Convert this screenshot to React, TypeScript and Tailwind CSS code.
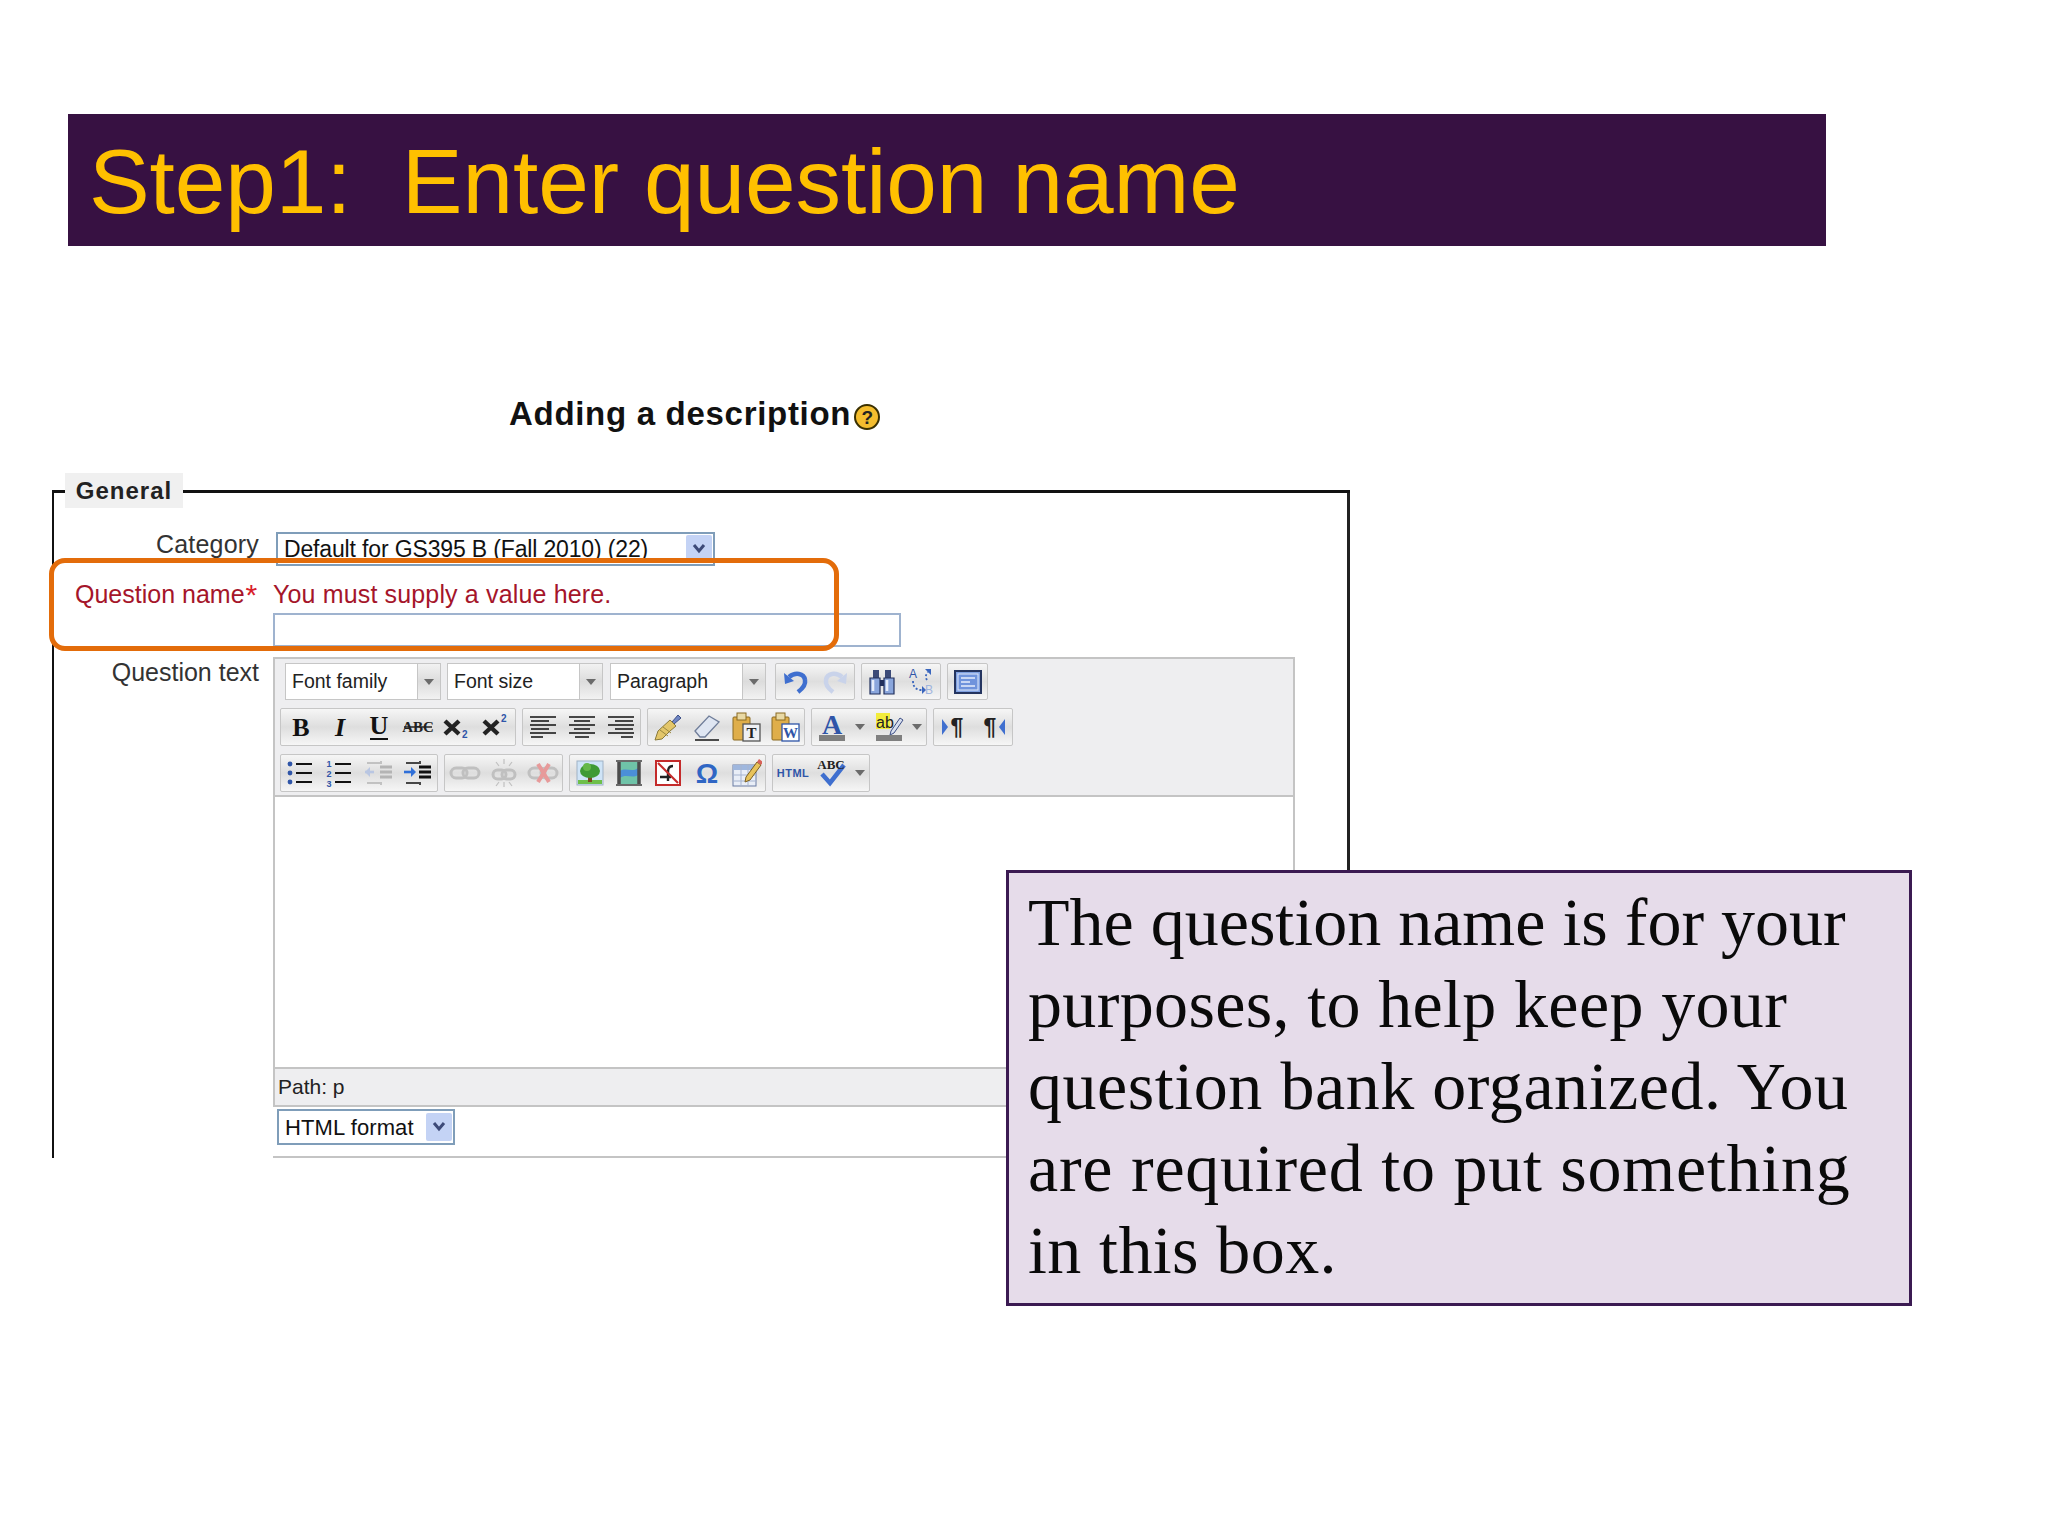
import type { ReactNode } from "react";

const Arrow = () => (
  <svg width="12" height="8" viewBox="0 0 12 8">
    <path d="M1 1h10L6 7z" fill="#6b6b6b" />
  </svg>
);

const Icon = ({ children }: { children: ReactNode }) => (
  <svg width="32" height="32" viewBox="0 0 32 32">
    {children}
  </svg>
);

const serif = "Liberation Serif";
const sans = "Liberation Sans";

const Undo = ({ color = "#3f6fcf", flip = false }: { color?: string; flip?: boolean }) => (
  <Icon>
    <g transform={flip ? "translate(32 0) scale(-1 1)" : undefined}>
      <path d="M9 11c6-5 15-4 16 3 1 5-3 9-7 12" fill="none" stroke={color} strokeWidth="4.5" />
      <path d="M4 7l1 11 9-3z" fill={color} />
    </g>
  </Icon>
);

const Find = () => (
  <Icon>
    <path d="M7 4h6v8H7zM19 4h6v8h-6z" fill="#3b4a78" />
    <path d="M4 12h10v16H4zM18 12h10v16H18z" fill="#8aa6dc" stroke="#22305c" strokeWidth="1.2" />
    <path d="M14 14h4v6h-4z" fill="#22305c" />
    <path d="M7 14v11M21 14v11" stroke="#e6edfa" strokeWidth="2.6" />
  </Icon>
);

const Replace = () => (
  <Icon>
    <text x="4" y="12" fontFamily={sans} fontSize="12" fill="#2f55a8">A</text>
    <text x="20" y="28" fontFamily={sans} fontSize="12" fill="#9db4de">B</text>
    <path d="M8 15c0 6 3 9 9 9M22 14c-2-3-1-6 1-8" fill="none" stroke="#3a66bd" strokeWidth="1.8" strokeDasharray="2 2" />
    <path d="M17 20l4 4-4 4zM20 3h6v6z" fill="#3a66bd" />
  </Icon>
);

const Fullscreen = () => (
  <Icon>
    <rect x="3" y="5" width="26" height="22" fill="#7fa0e0" stroke="#24345f" strokeWidth="2" />
    <rect x="6" y="8" width="20" height="16" fill="#6f93dc" stroke="#dfe8fa" />
    <path d="M9 12h14M9 16h9M9 20h14" stroke="#e8eefb" strokeWidth="1.6" />
  </Icon>
);

const LetterIcon = ({ text, italic = false, underline = false }: { text: string; italic?: boolean; underline?: boolean }) => (
  <Icon>
    <text x="16" y={underline ? 23 : 25} textAnchor="middle" fontFamily={serif} fontWeight="700" fontStyle={italic ? "italic" : "normal"} fontSize="26" fill="#111">
      {text}
    </text>
    {underline && <path d="M7 28h18" stroke="#111" strokeWidth="2" />}
  </Icon>
);

const Strike = () => (
  <Icon>
    <text x="16" y="21" textAnchor="middle" fontFamily={serif} fontWeight="700" fontSize="15" fill="#222">ABC</text>
    <path d="M2 16h28" stroke="#222" strokeWidth="1.5" />
  </Icon>
);

const Script = ({ sup = false }: { sup?: boolean }) => (
  <Icon>
    <path d="M4 10l14 13M18 10L4 23" stroke="#222" strokeWidth="4.4" />
    <text x="21" y={sup ? 11 : 27} fontFamily={sans} fontWeight="700" fontSize="10" fill="#2f55a8">2</text>
  </Icon>
);

const Align = ({ kind }: { kind: "left" | "center" | "right" }) => {
  const short = kind === "left" ? "M4 10h18M4 18h18M4 26h12" : kind === "center" ? "M8 10h16M8 18h16M9 26h14" : "M10 10h18M10 18h18M16 26h12";
  return (
    <Icon>
      <path d="M3 6h26M3 14h26M3 22h26" stroke="#111" strokeWidth="1.7" />
      <path d={short} stroke="#111" strokeWidth="1.7" />
    </Icon>
  );
};

const Brush = () => (
  <Icon>
    <path d="M20 11l6-7 3 3-7 6z" fill="#6f86c4" stroke="#3d4f86" />
    <path d="M18 9l6 6-6 5-8 8-7 1 3-9z" fill="#e3c66a" stroke="#8a7a3a" />
    <path d="M8 19l8 6M11 16l8 6" stroke="#9a8840" />
  </Icon>
);

const Eraser = () => (
  <Icon>
    <path d="M4 20L18 5l10 6-14 15H9z" fill="#dfe6f2" stroke="#6f7d99" strokeWidth="1.3" />
    <path d="M4 29h24" stroke="#222" strokeWidth="1.6" />
  </Icon>
);

const Paste = ({ letter }: { letter: "T" | "W" }) => (
  <Icon>
    <rect x="3" y="6" width="17" height="23" rx="1" fill="#dfae4a" stroke="#8a6a22" />
    <rect x="7" y="2" width="9" height="7" fill="#e9d9a4" stroke="#8a6a22" />
    <rect x="13" y="13" width="17" height="17" fill={letter === "T" ? "#eef0f4" : "#ffffff"} stroke={letter === "T" ? "#555" : "#2f55a8"} strokeWidth="1.3" />
    <text x="21.5" y="27" textAnchor="middle" fontFamily={serif} fontWeight="700" fontSize="15" fill={letter === "T" ? "#222" : "#2f55a8"}>{letter}</text>
  </Icon>
);

const ForeColor = () => (
  <Icon>
    <text x="16" y="23" textAnchor="middle" fontFamily={serif} fontWeight="700" fontSize="28" fill="#2f55a8">A</text>
    <rect x="3" y="24" width="26" height="6" fill="#7f7f7f" />
  </Icon>
);

const BackColor = () => (
  <Icon>
    <rect x="3" y="2" width="14" height="16" fill="#f2ec3c" />
    <text x="3" y="17" fontFamily={sans} fontSize="16" fill="#222">ab</text>
    <path d="M18 20l9-13 3 2-9 13-4 2z" fill="#d8dfee" stroke="#3d4f86" />
    <rect x="3" y="24" width="26" height="6" fill="#7f7f7f" />
  </Icon>
);

const Bidi = ({ rtl = false }: { rtl?: boolean }) => (
  <Icon>
    <text x={rtl ? 13 : 19} y="24" textAnchor="middle" fontFamily={sans} fontWeight="700" fontSize="23" fill="#222">¶</text>
    <path d={rtl ? "M28 8v16l-6-8z" : "M4 8v16l6-8z"} fill="#3f6fcf" />
  </Icon>
);

const BulList = () => (
  <Icon>
    <path d="M11 7h16M11 16h16M11 25h16" stroke="#111" strokeWidth="2" />
    <circle cx="5" cy="7" r="2.4" fill="#2f55a8" />
    <circle cx="5" cy="16" r="2.4" fill="#2f55a8" />
    <circle cx="5" cy="25" r="2.4" fill="#2f55a8" />
  </Icon>
);

const NumList = () => (
  <Icon>
    <path d="M11 7h16M11 16h16M11 25h16" stroke="#111" strokeWidth="2" />
    <text x="5" y="10" textAnchor="middle" fontFamily={sans} fontWeight="700" fontSize="9" fill="#2f55a8">1</text>
    <text x="5" y="20" textAnchor="middle" fontFamily={sans} fontWeight="700" fontSize="9" fill="#2f55a8">2</text>
    <text x="5" y="30" textAnchor="middle" fontFamily={sans} fontWeight="700" fontSize="9" fill="#2f55a8">3</text>
  </Icon>
);

const Indent = ({ outdent = false }: { outdent?: boolean }) => {
  const ink = outdent ? "#b4b4b4" : "#111";
  const blue = outdent ? "#b9c6e2" : "#2f6fd8";
  return (
    <Icon>
      <path d="M13 6h4M13 26h4M18 4v3M18 25v3" stroke={ink} strokeWidth="1.5" />
      <path d="M17 10h12M17 15h12M17 20h12" stroke={ink} strokeWidth="3" />
      <path d="M4 26h9M4 6h9" stroke={ink} strokeWidth="1.6" />
      <path d="M2 15h9" stroke={blue} strokeWidth="2.6" />
      <path d={outdent ? "M2 15l5-5v10z" : "M14 15l-5-5v10z"} fill={blue} />
    </Icon>
  );
};

const Chain = ({ broken = false, cross = false }: { broken?: boolean; cross?: boolean }) => (
  <Icon>
    <g fill="none" stroke="#c0c0c0" strokeWidth="3">
      {broken ? (
        <>
          <rect x="5" y="13" width="13" height="9" rx="4.5" />
          <rect x="14" y="13" width="13" height="9" rx="4.5" />
          <path d="M16 2v5M16 25v5M8 5l3 4M24 5l-3 4M8 29l3-4M24 29l-3-4" strokeWidth="1.2" />
        </>
      ) : (
        <>
          <rect x="2" y="11" width="16" height="10" rx="5" />
          <rect x="14" y="11" width="16" height="10" rx="5" />
        </>
      )}
    </g>
    {cross && <path d="M11 7l11 18M22 7L11 25" stroke="#e79a9a" strokeWidth="4" />}
  </Icon>
);

const ImageIcon = () => (
  <Icon>
    <rect x="3" y="4" width="26" height="24" fill="#cfe4f7" stroke="#9fb2c6" />
    <rect x="4" y="23" width="24" height="4" fill="#6fc04a" />
    <path d="M14 18h4v7h-4z" fill="#7a4a1f" />
    <ellipse cx="16" cy="14" rx="10" ry="7" fill="#3f9a34" />
    <circle cx="13" cy="10" r="4" fill="#66b848" />
  </Icon>
);

const Media = () => (
  <Icon>
    <rect x="7" y="3" width="18" height="26" fill="#6fc3a8" />
    <path d="M7 14c6-4 12 2 18-3v7c-6 4-12-2-18 3z" fill="#4b8fd8" />
    <path d="M6 3v26M26 3v26" stroke="#4c4c4c" strokeWidth="3.5" />
    <path d="M3 4h26M3 28h26" stroke="#6a6a6a" strokeWidth="2" />
  </Icon>
);

const Flash = () => (
  <Icon>
    <rect x="4" y="4" width="24" height="24" fill="#fff" stroke="#c42b2b" strokeWidth="2" />
    <path d="M8 20h11M21 9c-5 0-5 4-5 7v8" fill="none" stroke="#222" strokeWidth="2.4" />
    <path d="M6 6l20 20" stroke="#c42b2b" strokeWidth="2.2" />
  </Icon>
);

const Omega = () => (
  <Icon>
    <text x="16" y="26" textAnchor="middle" fontFamily={sans} fontWeight="700" fontSize="28" fill="#2f66c4">Ω</text>
  </Icon>
);

const Table = () => (
  <Icon>
    <rect x="3" y="8" width="23" height="21" fill="#e9eef7" stroke="#6b7da3" />
    <rect x="3" y="8" width="23" height="5" fill="#9fb7de" />
    <path d="M3 18h23M3 24h23M11 8v21M18 8v21" stroke="#a6b4cf" />
    <path d="M16 20l11-15 4 3-11 15-5 2z" fill="#e8c35a" stroke="#7a5f22" />
    <path d="M27 5l2-3 4 3-2 3z" fill="#d8625a" />
  </Icon>
);

const Html = () => (
  <Icon>
    <text x="16" y="20" textAnchor="middle" fontFamily={sans} fontWeight="700" fontSize="11" fill="#2f55a8" letterSpacing="0.5">HTML</text>
  </Icon>
);

const Spell = () => (
  <Icon>
    <path d="M6 17l8 9L28 8" fill="none" stroke="#3f6fcf" strokeWidth="4.5" />
    <text x="15" y="12" textAnchor="middle" fontFamily={serif} fontWeight="700" fontSize="13" fill="#222">ABC</text>
  </Icon>
);

const Slot = ({ children }: { children: ReactNode }) => (
  <div className="flex w-[39px] items-center justify-center">{children}</div>
);

const ArrowSlot = () => (
  <div className="flex w-[18px] items-center justify-center">
    <Arrow />
  </div>
);

const Group = ({ children }: { children: ReactNode }) => (
  <div className="flex h-full rounded-[2px] border border-[#c6c6c6] bg-linear-to-b from-[#f6f6f6] via-[#dedede] to-[#f6f6f6]">
    {children}
  </div>
);

const ListBox = ({ label }: { label: string }) => (
  <div className="flex h-full w-[156px] border border-[#c6c6c6] bg-white">
    <div className="flex-1 pl-[6px] text-[19.5px] leading-[35px] text-[#222]">{label}</div>
    <div className="flex w-[23px] items-center justify-center border-l border-[#c6c6c6] bg-linear-to-b from-[#f2f2f2] via-[#dcdcdc] to-[#f2f2f2]">
      <Arrow />
    </div>
  </div>
);

const SelectBox = ({ label, className }: { label: string; className: string }) => (
  <div className={`flex items-center justify-between border-2 border-[#7f9db9] bg-white pl-[6px] pr-[1px] text-[#111] ${className}`}>
    <span className="whitespace-nowrap">{label}</span>
    <div className="flex h-[28px] w-[26px] items-center justify-center rounded-[2px] bg-[#c4d3f5]">
      <svg width="14" height="10" viewBox="0 0 14 10">
        <path d="M2 1l5 6 5-6" fill="none" stroke="#3d4a78" strokeWidth="3" />
      </svg>
    </div>
  </div>
);

export default function App() {
  return (
    <div className="relative h-[1536px] w-[2048px] overflow-hidden bg-white font-['Liberation_Sans',sans-serif]">
      <div className="ml-[68px] mt-[114px] flex h-[132px] w-[1758px] items-center bg-[#371142] pl-[21px] pt-[3px]">
        <h1 className="whitespace-pre text-[91px] leading-none tracking-[-0.1px] text-[#ffc000]">Step1:  Enter question name</h1>
      </div>

      <div className="ml-[509px] mt-[146px] flex h-[44px] items-center">
        <h2 className="text-[33px] font-bold tracking-[0.7px] text-[#111]">Adding a description</h2>
        <div className="ml-[3px] mt-[6px] flex h-[26px] w-[26px] items-center justify-center rounded-full border-2 border-[#3a3000] bg-[#f4bd2e] text-[19px] font-bold leading-none text-[#222]">
          ?
        </div>
      </div>

      <div className="relative ml-[52px] mt-[54px] h-[668px] w-[1298px] border-l-2 border-t-[3px] border-[#111]">
        <span className="absolute right-0 top-0 h-[400px] w-[3px] bg-[#222]" />
        <div className="absolute left-[11px] top-[-20px] flex h-[35px] w-[118px] items-center justify-center bg-[#f0f0f0] text-[24px] font-bold tracking-[1px] text-[#222]">
          General
        </div>

        <div className="flex pt-[39px]">
          <div className="w-[205px] text-right text-[25px] leading-[24px] tracking-[0.2px] text-[#333]">Category</div>
          <SelectBox label="Default for GS395 B (Fall 2010) (22)" className="ml-[17px] h-[34px] w-[439px] text-[23px] tracking-[-0.15px]" />
        </div>

        <div className="mt-[15px] flex">
          <div className="flex w-[205px] items-start pl-[21px] text-[25px] leading-[27px] text-[#a5152a]">
            Question name<span className="ml-[1px] text-[30px] leading-[27px] text-[#d8202a]">*</span>
          </div>
          <div className="ml-[14px]">
            <div className="h-[32px] whitespace-nowrap pl-[-1px] text-[25px] leading-[27px] tracking-[0.15px] text-[#a5152a]">You must supply a value here.</div>
            <div className="h-[34px] w-[628px] border-2 border-[#9fb3cf] bg-white" />
          </div>
        </div>

        <div className="mt-[10px] flex">
          <div className="w-[205px] text-right text-[25px] leading-[30px] text-[#333]">Question text</div>
          <div className="ml-[14px]">
            <div className="h-[450px] w-[1022px] border-2 border-[#c4c4c4]">
              <div className="flex h-[138px] flex-col gap-[8px] border-b-2 border-[#c4c4c4] bg-[#eeeef0] pl-[5px] pt-[4px]">
                <div className="flex h-[37px] pl-[5px]">
                  <ListBox label="Font family" />
                  <div className="w-[6px]" />
                  <ListBox label="Font size" />
                  <div className="w-[7px]" />
                  <ListBox label="Paragraph" />
                  <div className="w-[9px]" />
                  <Group>
                    <Slot><Undo /></Slot>
                    <Slot><Undo color="#c9d3ea" flip /></Slot>
                  </Group>
                  <div className="w-[6px]" />
                  <Group>
                    <Slot><Find /></Slot>
                    <Slot><Replace /></Slot>
                  </Group>
                  <div className="w-[6px]" />
                  <Group>
                    <Slot><Fullscreen /></Slot>
                  </Group>
                </div>
                <div className="flex h-[38px] gap-[6px]">
                  <Group>
                    <Slot><LetterIcon text="B" /></Slot>
                    <Slot><LetterIcon text="I" italic /></Slot>
                    <Slot><LetterIcon text="U" underline /></Slot>
                    <Slot><Strike /></Slot>
                    <Slot><Script /></Slot>
                    <Slot><Script sup /></Slot>
                  </Group>
                  <Group>
                    <Slot><Align kind="left" /></Slot>
                    <Slot><Align kind="center" /></Slot>
                    <Slot><Align kind="right" /></Slot>
                  </Group>
                  <Group>
                    <Slot><Brush /></Slot>
                    <Slot><Eraser /></Slot>
                    <Slot><Paste letter="T" /></Slot>
                    <Slot><Paste letter="W" /></Slot>
                  </Group>
                  <Group>
                    <Slot><ForeColor /></Slot>
                    <ArrowSlot />
                    <Slot><BackColor /></Slot>
                    <ArrowSlot />
                  </Group>
                  <Group>
                    <Slot><Bidi /></Slot>
                    <Slot><Bidi rtl /></Slot>
                  </Group>
                </div>
                <div className="flex h-[38px] gap-[6px]">
                  <Group>
                    <Slot><BulList /></Slot>
                    <Slot><NumList /></Slot>
                    <Slot><Indent outdent /></Slot>
                    <Slot><Indent /></Slot>
                  </Group>
                  <Group>
                    <Slot><Chain /></Slot>
                    <Slot><Chain broken /></Slot>
                    <Slot><Chain cross /></Slot>
                  </Group>
                  <Group>
                    <Slot><ImageIcon /></Slot>
                    <Slot><Media /></Slot>
                    <Slot><Flash /></Slot>
                    <Slot><Omega /></Slot>
                    <Slot><Table /></Slot>
                  </Group>
                  <Group>
                    <Slot><Html /></Slot>
                    <Slot><Spell /></Slot>
                    <ArrowSlot />
                  </Group>
                </div>
              </div>
              <div className="h-[270px] bg-white" />
              <div className="h-[38px] border-t-2 border-[#c4c4c4] bg-[#eeeef0] pl-[3px] text-[21px] leading-[36px] text-[#222]">
                Path: p
              </div>
            </div>
            <SelectBox label="HTML format" className="ml-[4px] mt-[2px] h-[36px] w-[178px] text-[22px] tracking-[0.1px]" />
            <div className="mt-[11px] h-[2px] w-[1022px] bg-[#c4c4c4]" />
          </div>
        </div>
      </div>

      <div className="absolute left-[49px] top-[558px] h-[93px] w-[790px] rounded-[16px] border-[5px] border-[#e36c0a]" />

      <div className="absolute left-[1006px] top-[870px] h-[436px] w-[906px] border-[3px] border-[#3b1a52] bg-[#e6dcea] pl-[19px] pt-[8px] font-['Liberation_Serif',serif] text-[68px] leading-[82px] text-[#0a0a0a]">
        <div className="whitespace-nowrap">The question name is for your</div>
        <div className="whitespace-nowrap tracking-[0.35px]">purposes, to help keep your</div>
        <div className="whitespace-nowrap tracking-[0.55px]">question bank organized. You</div>
        <div className="whitespace-nowrap tracking-[0.75px]">are required to put something</div>
        <div className="whitespace-nowrap tracking-[0.4px]">in this box.</div>
      </div>
    </div>
  );
}
